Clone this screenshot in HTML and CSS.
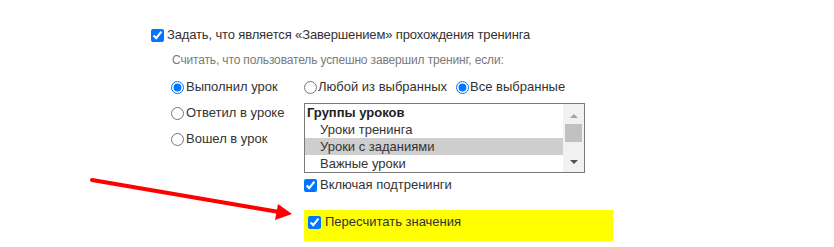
FILE: index.html
```html
<!DOCTYPE html>
<html lang="ru">
<head>
<meta charset="utf-8">
<link rel="stylesheet" href="styles.css">
</head>
<body>
<div class="page">
  <label class="row top"><input type="checkbox" checked><span>Задать, что является «Завершением» прохождения тренинга</span></label>
  <div class="hint">Считать, что пользователь успешно завершил тренинг, если:</div>
  <div class="cols">
    <div class="left">
      <label class="row"><input type="radio" name="a" checked><span>Выполнил урок</span></label>
      <label class="row"><input type="radio" name="a"><span>Ответил в уроке</span></label>
      <label class="row"><input type="radio" name="a"><span>Вошел в урок</span></label>
    </div>
    <div class="right">
      <div class="inline">
        <label class="row"><input type="radio" name="b"><span>Любой из выбранных</span></label>
        <label class="row"><input type="radio" name="b" checked><span>Все выбранные</span></label>
      </div>
      <div class="listbox">
        <div class="items">
          <div class="item group">Группы уроков</div>
          <div class="item">Уроки тренинга</div>
          <div class="item selected">Уроки с заданиями</div>
          <div class="item">Важные уроки</div>
        </div>
        <div class="scrollbar">
          <div class="arr up"></div>
          <div class="thumb"></div>
          <div class="track"></div>
          <div class="arr down"></div>
        </div>
      </div>
      <label class="row sub"><input type="checkbox" checked><span>Включая подтренинги</span></label>
      <div class="highlight">
        <label class="row"><input type="checkbox" checked><span>Пересчитать значения</span></label>
      </div>
    </div>
  </div>
  <svg class="arrow" width="834" height="247" viewBox="0 0 834 247">
    <line x1="92" y1="180" x2="279" y2="212" stroke="#ff0000" stroke-width="4" stroke-linecap="round"/>
    <polygon points="278,204 292,214 275,220" fill="#ff0000"/>
  </svg>
</div>
</body>
</html>
```
FILE: styles.css
```css
html, body {
  margin: 0;
  padding: 0;
  background: #ffffff;
}
.page {
  position: relative;
  width: 834px;
  height: 247px;
  box-sizing: border-box;
  padding: 25px 0 0 151px;
  font-family: "Liberation Sans", Arial, sans-serif;
  font-size: 13px;
  color: #333333;
  overflow: hidden;
}
.row {
  display: flex;
  align-items: center;
  height: 20px;
  line-height: 20px;
  white-space: nowrap;
}
.row input {
  margin: 0 3px 0 0;
  width: 13px;
  height: 13px;
  flex: none;
}
.top span {
  letter-spacing: -0.14px;
}
.hint {
  margin: 6px 0 0 21px;
  height: 18px;
  line-height: 18px;
  font-size: 12px;
  color: #7a7a7a;
  letter-spacing: -0.15px;
}
.cols {
  display: flex;
  margin: 8px 0 0 20px;
}
.left {
  width: 133px;
  display: flex;
  flex-direction: column;
  gap: 6px;
}
.left .row input {
  margin-right: 2px;
}
.right {
  display: flex;
  flex-direction: column;
}
.inline {
  display: flex;
  gap: 9px;
}
.inline .row input {
  margin-right: 1px;
}
.listbox {
  margin-top: 6px;
  width: 281px;
  height: 70px;
  box-sizing: border-box;
  border: 1px solid #7a7a7a;
  display: flex;
}
.items {
  flex: 1;
}
.item {
  height: 17px;
  line-height: 17px;
  padding-left: 15px;
  color: #333333;
  white-space: nowrap;
}
.item.group {
  padding-left: 2px;
  font-weight: bold;
  color: #222222;
}
.item.selected {
  background: #cecece;
}
.scrollbar {
  width: 21px;
  background: #f1f1f1;
  display: flex;
  flex-direction: column;
  align-items: center;
}
.arr {
  width: 0;
  height: 0;
  border-left: 4px solid transparent;
  border-right: 4px solid transparent;
}
.arr.up {
  margin-top: 10px;
  border-bottom: 4px solid #a3a3a3;
}
.thumb {
  margin-top: 6px;
  width: 17px;
  height: 18px;
  background: #c1c1c1;
}
.track {
  flex: 1;
}
.arr.down {
  margin-bottom: 8px;
  border-top: 4px solid #505050;
}
.sub {
  margin-top: 2px;
}
.highlight {
  margin-top: 15px;
  width: 309px;
  height: 31px;
  box-sizing: border-box;
  padding: 2px 4px 0;
  background: #ffff00;
}
.highlight .row input {
  margin-right: 4px;
}
.arrow {
  position: absolute;
  left: 0;
  top: 0;
  pointer-events: none;
}
```
